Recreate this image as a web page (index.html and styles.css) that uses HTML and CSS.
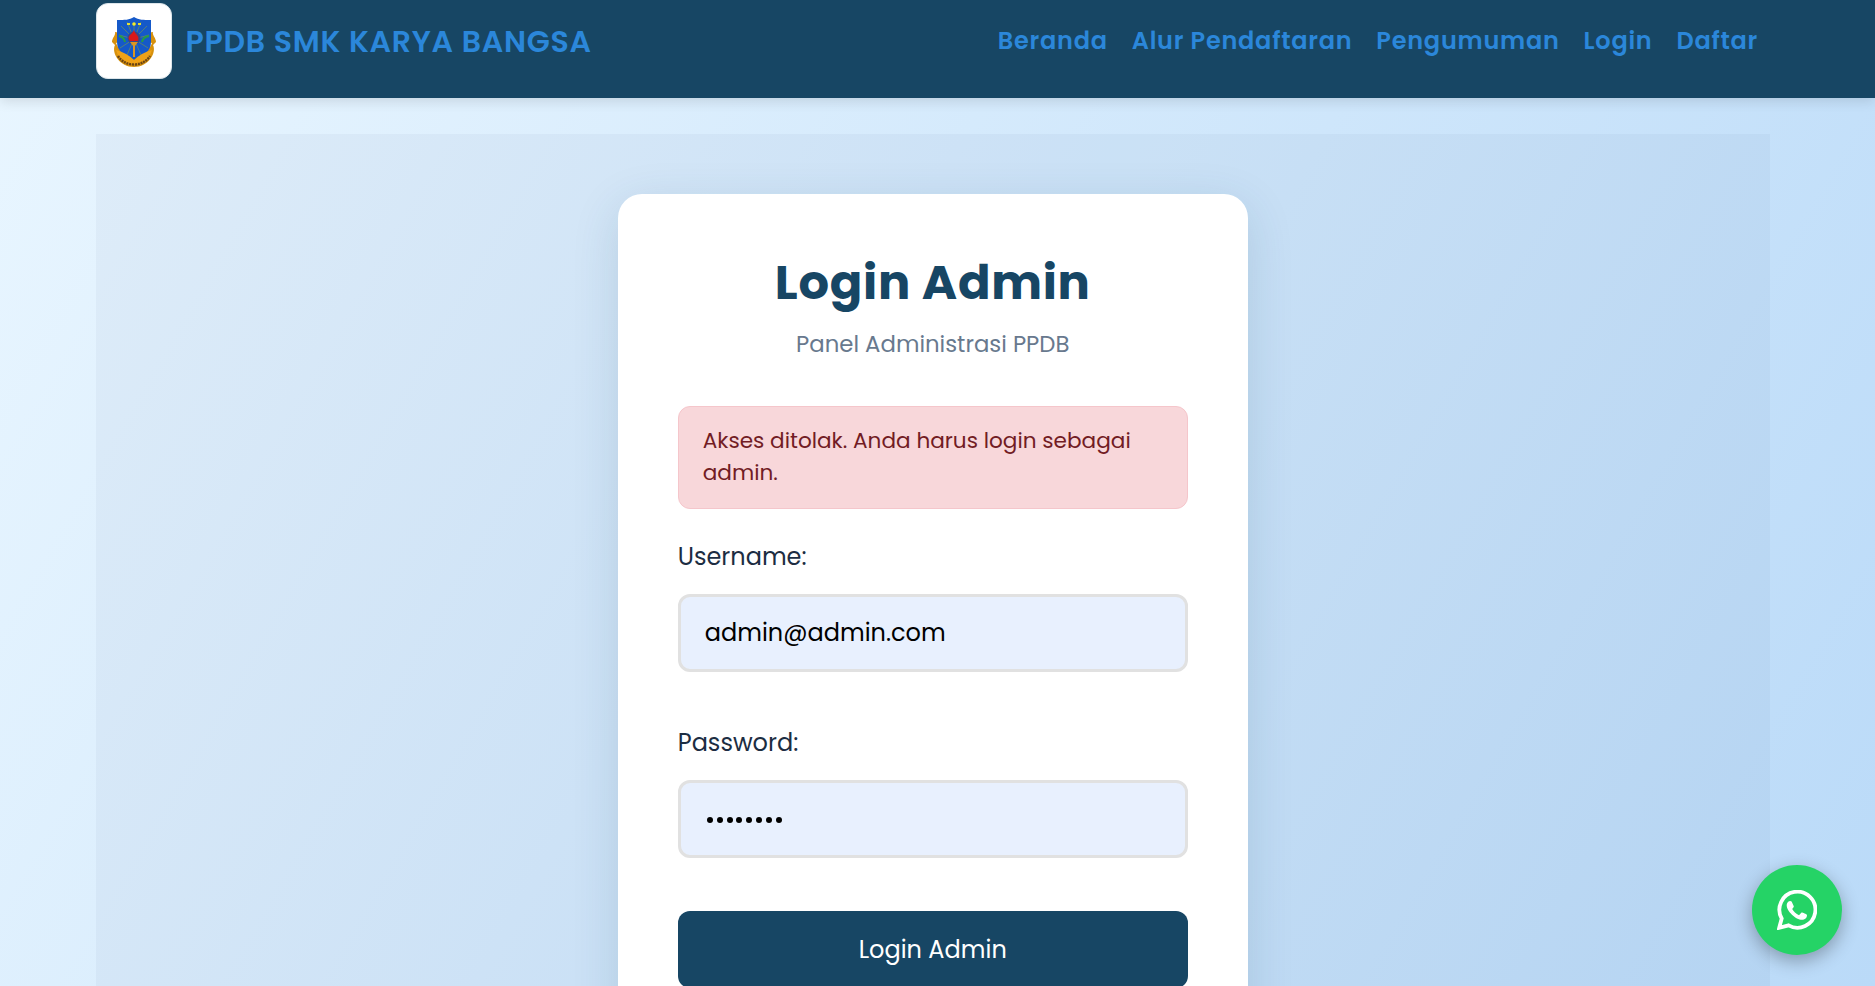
FILE: index.html
```html
<!DOCTYPE html>
<html lang="id">
<head>
<meta charset="utf-8">
<title>Login Admin - PPDB SMK Karya Bangsa</title>
<link rel="stylesheet" href="styles.css">
</head>
<body>
<header class="header">
  <div class="brand">
    <span class="logo">
      <svg viewBox="0 0 46 50" width="46" height="50">
        <path d="M4 15C9 15 9 19 6 21C9 21 9 25 5 26C6 29 8 31 9 33L37 33C38 31 40 29 41 26C37 25 37 21 40 21C37 19 37 15 42 15C41 18 45 21 45 25L42 28C46 36 37 50 23 50C9 50 0 36 4 28L1 25C1 21 5 18 4 15Z" fill="#d7910d"/>
        <path d="M6 3C14 3 18 3 23 0C28 3 32 3 40 3V25C40 34 33 39 23 43C13 39 6 34 6 25Z" fill="#1559c9"/>
        <path d="M23 22L10 9M23 22L16 5M23 22L30 5M23 22L36 9M23 22L8 18M23 22L38 18M23 22L9 31M23 22L37 31M23 22L16 38M23 22L30 38M23 22L23 6" stroke="#6f9155" stroke-width=".7"/>
        <path d="M8 19Q13 20 14 25M38 19Q32 20 31 25" stroke="#269d45" stroke-width="2" fill="none"/>
        <circle cx="23" cy="21" r="6.5" fill="#364a86"/>
        <path d="M19 24C15 19 21 18 23 13C24 18 29 18 27 24Z" fill="#d9181a"/>
        <path d="M19 25H27L24 29L24 40H22V29Z" fill="#db9623"/>
        <circle cx="23" cy="7" r="1.800" fill="#f6ed25"/>
        <path d="M16 7H19M27 7H30" stroke="#e4df35" stroke-width="2"/>
        <path d="M5 33Q16 36 23 43Q30 36 41 33L38 41Q31 47 23 47Q14 47 8 41Z" fill="#f0a216"/>
        <path d="M7 39Q12 47 23 47.500Q34 47 39 39" stroke="#6b4514" stroke-width="2.400" stroke-dasharray="2 .8" fill="none"/>
      </svg>
    </span>
    <span class="brand-name">PPDB SMK KARYA BANGSA</span>
  </div>
  <nav class="nav">
    <a>Beranda</a><a>Alur Pendaftaran</a><a>Pengumuman</a><a>Login</a><a>Daftar</a>
  </nav>
</header>
<main class="section">
  <form class="card">
    <h1 class="title">Login Admin</h1>
    <p class="subtitle">Panel Administrasi PPDB</p>
    <div class="alert">Akses ditolak. Anda harus login sebagai admin.</div>
    <label class="label">Username:</label>
    <div class="input">admin@admin.com</div>
    <label class="label">Password:</label>
    <div class="input dots"><i></i><i></i><i></i><i></i><i></i><i></i><i></i><i></i></div>
    <div class="button">Login Admin</div>
  </form>
</main>
<a class="whatsapp">
  <svg viewBox="0 0 40 40" width="40" height="40" fill="none">
    <path d="M2.200 37.800L4.700 28.500A18 18 0 1 1 11.600 35.400Z" stroke="#fff" stroke-width="3.800"/>
    <path d="M11.200 11.700C12 10.800 14 10.700 14.600 11.500L16.800 16.200C17 17 15.500 18.500 15.200 19C16.500 21.500 19 24 22 25.200L24.300 22.700C25 22.200 29.500 24.300 29.900 24.800C30.500 27.800 27.500 29.800 25 29.800C19 29.800 9.500 21 9.700 15.200C9.800 13.500 10.300 12.500 11.200 11.700Z" fill="#fff"/>
  </svg>
</a>
</body>
</html>
```
FILE: styles.css
```css
* { box-sizing: border-box; }
html { height: 100%; overflow: hidden; }
body {
  margin: 0;
  height: 986px;
  overflow: hidden;
  font-family: Poppins, Inter, sans-serif;
  background: linear-gradient(120deg, #e9f6ff 0%, #badaf8 100%);
}
.header {
  height: 98px;
  padding: 3px 117px 19px 95.500px;
  display: flex;
  justify-content: space-between;
  align-items: center;
  background: #174664;
  box-shadow: 0 3px 12px rgba(0, 0, 0, .12);
  color: #2b87da;
  position: relative;
}
.brand { display: flex; align-items: center; gap: 14px; }
.logo {
  width: 76px;
  height: 76px;
  padding-top: 1px;
  border-radius: 12px;
  background: #fff;
  border: 1px solid #dce5ea;
  display: flex;
  align-items: center;
  justify-content: center;
}
.brand-name { padding-top: 1px; font-size: 30px; font-weight: 600; letter-spacing: .75px; white-space: nowrap; }
.nav { display: flex; gap: 24px; padding-bottom: 2px; font-size: 24px; font-weight: 600; letter-spacing: .75px; white-space: nowrap; }
.section {
  margin: 36px 105px 0 95.500px;
  height: 852px;
  padding: 60px 0 0;
  overflow: hidden;
  display: flex;
  justify-content: center;
  align-items: flex-start;
  background: rgba(45, 60, 115, .045);
}
.card {
  width: 630px;
  height: 900px;
  flex: none;
  padding: 60px;
  border-radius: 24px;
  background: #fff;
  box-shadow: 0 12px 48px rgba(23, 70, 100, .14);
}
.title {
  margin: 0;
  text-align: center;
  font-size: 48px;
  line-height: 58px;
  font-weight: 700;
  letter-spacing: .7px;
  color: #174664;
}
.subtitle { margin: 17px 0 46px; text-align: center; font-size: 22.800px; line-height: 31px; color: #68798e; }
.alert {
  height: 103px;
  padding: 18px 24px;
  border: 1px solid #f5c6cb;
  border-radius: 12px;
  background: #f8d7da;
  color: #721c24;
  font-size: 21.600px;
  line-height: 32px;
}
.label { display: block; margin-top: 30px; height: 55px; font-size: 24px; line-height: 36px; color: #1c2d42; }
.input {
  height: 78px;
  border: 3px solid #e1e1e1;
  border-radius: 12px;
  background: #e8f0fe;
  padding: 0 24px;
  font-size: 24px;
  line-height: 72px;
  color: #000;
}
.input + .label { margin-top: 53px; }
.dots { display: flex; align-items: center; gap: 3.900px; padding-left: 26px; }
.dots i { width: 6px; height: 6px; border-radius: 50%; background: #000; margin-top: 1px; }
.button {
  margin-top: 53px;
  height: 77px;
  border-radius: 12px;
  background: #174664;
  color: #fff;
  text-align: center;
  font-size: 24px;
  line-height: 77px;
}
.whatsapp {
  position: fixed;
  right: 33px;
  bottom: 31px;
  width: 90px;
  height: 90px;
  border-radius: 50%;
  background: #25d366;
  box-shadow: 0 6px 18px rgba(0, 0, 0, .3);
  display: flex;
  align-items: center;
  justify-content: center;
}
```
